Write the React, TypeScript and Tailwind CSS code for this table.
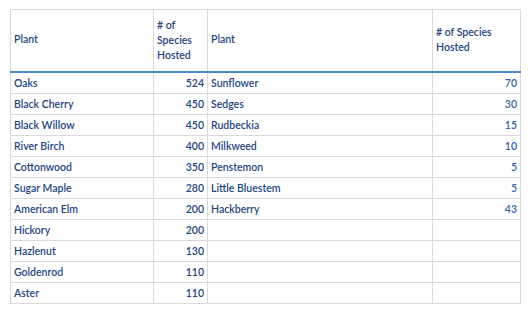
const left: [string, number][] = [
  ['Oaks', 524],
  ['Black Cherry', 450],
  ['Black Willow', 450],
  ['River Birch', 400],
  ['Cottonwood', 350],
  ['Sugar Maple', 280],
  ['American Elm', 200],
  ['Hickory', 200],
  ['Hazlenut', 130],
  ['Goldenrod', 110],
  ['Aster', 110],
];

const right: [string, number][] = [
  ['Sunflower', 70],
  ['Sedges', 30],
  ['Rudbeckia', 15],
  ['Milkweed', 10],
  ['Penstemon', 5],
  ['Little Bluestem', 5],
  ['Hackberry', 43],
];

const cell = 'border border-[#d9d9d9] px-[3px] h-[20px] leading-[20px] p-0';
const head = 'border border-[#d9d9d9] border-b-2 border-b-[#4a86c8] px-[3px] text-left font-semibold align-middle';

export default function App() {
  return (
    <div className="w-[532px] h-[316px] bg-white pt-[9px] pl-[10px] font-['Lato','Liberation_Sans',sans-serif] text-[10.5px] font-semibold text-[#23457f]">
      <table className="border-collapse table-fixed w-[511px]">
        <colgroup>
          <col className="w-[143px]" />
          <col className="w-[54px]" />
          <col className="w-[225px]" />
          <col className="w-[88px]" />
        </colgroup>
        <thead>
          <tr className="h-[62px]">
            <th className={head}>Plant</th>
            <th className={`${head} leading-[15px]`}>
              # of<br />Species<br />Hosted
            </th>
            <th className={head}>Plant</th>
            <th className={`${head} leading-[15px]`}>
              # of Species<br />Hosted
            </th>
          </tr>
        </thead>
        <tbody>
          {left.map(([name, n], i) => {
            const r = right[i];
            return (
              <tr key={name}>
                <td className={cell}>{name}</td>
                <td className={`${cell} text-right`}>{n}</td>
                <td className={cell}>{r ? r[0] : ''}</td>
                <td className={`${cell} text-right text-[#3563ab]`}>{r ? r[1] : ''}</td>
              </tr>
            );
          })}
        </tbody>
      </table>
    </div>
  );
}
